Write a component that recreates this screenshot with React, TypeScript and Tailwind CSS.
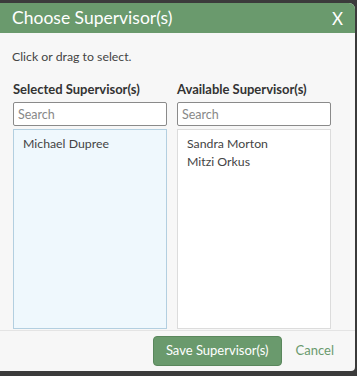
import React from "react";

export default function App() {
  const font = { fontFamily: "Lato, 'Open Sans', sans-serif" };
  return (
    <div className="w-[357px] h-[376px] bg-[#3b3b3b] relative overflow-hidden" style={font}>
      <div className="absolute left-0 top-[3px] w-[355px] h-[368px] bg-[#f7f7f7] rounded-tr-[6px] rounded-br-[4px] flex flex-col overflow-hidden">
        <div className="h-[30px] bg-[#6a9a6d] flex items-center justify-between pl-[12px] pr-[12px] shrink-0">
          <span className="text-white text-[17.5px] leading-none">Choose Supervisor(s)</span>
          <span className="text-white text-[17px] leading-none">X</span>
        </div>
        <div className="px-[13px] pt-[16px] flex-1 flex flex-col">
          <div className="text-[12.3px] text-[#444] leading-[16px] -ml-px">Click or drag to select.</div>
          <div className="flex gap-[10px] mt-[16px] flex-1">
            <div className="w-[154px] flex flex-col">
              <div className="text-[13px] font-bold text-[#333] leading-[16px] mb-[5px]">Selected Supervisor(s)</div>
              <input
                placeholder="Search"
                className="h-[24px] border border-[#8a8a8a] rounded-[2px] bg-white px-[4px] text-[12.5px] placeholder:text-[#888] outline-none"
              />
              <div className="mt-[3px] h-[200px] bg-[#eff8fd] border border-[#b3cfe0] px-[9px] pt-[5px] text-[12.3px] text-[#444] leading-[18px]">
                Michael Dupree
              </div>
            </div>
            <div className="w-[154px] flex flex-col">
              <div className="text-[13px] font-bold text-[#333] leading-[16px] mb-[5px]">Available Supervisor(s)</div>
              <input
                placeholder="Search"
                className="h-[24px] border border-[#8a8a8a] rounded-[2px] bg-white px-[4px] text-[12.5px] placeholder:text-[#888] outline-none"
              />
              <div className="mt-[3px] h-[200px] bg-white border border-[#dcdcdc] px-[9px] pt-[5px] text-[12.3px] text-[#444] leading-[18px]">
                <div>Sandra Morton</div>
                <div>Mitzi Orkus</div>
              </div>
            </div>
          </div>
        </div>
        <div className="border-t border-[#e4e4e4] h-[41px] flex items-center justify-end pr-[21px] gap-[14px] shrink-0">
          <button className="h-[30px] px-[12px] bg-[#6a9a6d] border border-[#5a875d] rounded-[4px] text-white text-[13px]">
            Save Supervisor(s)
          </button>
          <span className="text-[#6a9a6d] text-[13px]">Cancel</span>
        </div>
      </div>
    </div>
  );
}
